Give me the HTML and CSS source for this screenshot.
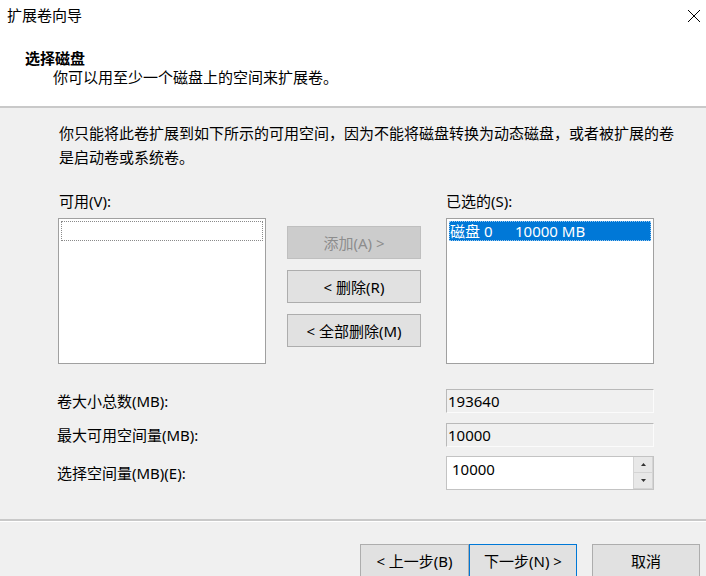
FILE: index.html
```html
<!DOCTYPE html>
<html lang="zh-CN">
<head>
<meta charset="utf-8">
<title>扩展卷向导</title>
<link rel="stylesheet" href="styles.css">
</head>
<body>
<div class="window">
  <div class="titlebar">
    <span class="title">扩展卷向导</span>
    <svg class="close" width="14" height="14" viewBox="0 0 14 14"><path d="M1 1 L13 13 M13 1 L1 13" stroke="#000" stroke-width="1" fill="none"/></svg>
  </div>
  <div class="header">
    <div class="h-title">选择磁盘</div>
    <div class="h-sub">你可以用至少一个磁盘上的空间来扩展卷。</div>
  </div>
  <div class="sep"></div>
  <div class="content">
    <p class="desc">你只能将此卷扩展到如下所示的可用空间，因为不能将磁盘转换为动态磁盘，或者被扩展的卷是启动卷或系统卷。</p>
    <div class="lists">
      <div class="col">
        <div class="lbl">可用(V):</div>
        <div class="listbox">
          <div class="focus-row"></div>
        </div>
      </div>
      <div class="btn-col">
        <div class="btn disabled">添加(A) &gt;</div>
        <div class="btn">&lt; 删除(R)</div>
        <div class="btn">&lt; 全部删除(M)</div>
      </div>
      <div class="col">
        <div class="lbl">已选的(S):</div>
        <div class="listbox">
          <div class="sel-row"><span class="disk">磁盘 0</span><span>10000 MB</span></div>
        </div>
      </div>
    </div>
    <div class="fields">
      <div class="f-row r1">
        <span class="f-lbl">卷大小总数(MB):</span>
        <div class="ro">193640</div>
      </div>
      <div class="f-row r2">
        <span class="f-lbl">最大可用空间量(MB):</span>
        <div class="ro">10000</div>
      </div>
      <div class="f-row r3">
        <span class="f-lbl">选择空间量(MB)(E):</span>
        <div class="spin">
          <div class="spin-val">10000</div>
          <div class="spin-btns">
            <div class="sb"><svg width="5" height="3" viewBox="0 0 5 3"><path d="M0 3 L2.5 0 L5 3 Z" fill="#333"/></svg></div>
            <div class="sb"><svg width="5" height="3" viewBox="0 0 5 3"><path d="M0 0 L5 0 L2.5 3 Z" fill="#333"/></svg></div>
          </div>
        </div>
      </div>
    </div>
  </div>
  <div class="sep bottom"></div>
  <div class="footer">
    <div class="fbtn back">&lt; 上一步(B)</div>
    <div class="fbtn next">下一步(N) &gt;</div>
    <div class="fbtn cancel">取消</div>
  </div>
</div>
</body>
</html>
```
FILE: styles.css
```css
* { box-sizing: border-box; }
html, body { margin: 0; padding: 0; }
body {
  width: 706px;
  height: 576px;
  overflow: hidden;
  background: #f0f0f0;
  font-family: "Noto Sans", "Noto Sans CJK SC", sans-serif;
  font-size: 15px;
  color: #000;
}
.window { width: 706px; height: 576px; }
.titlebar {
  height: 30px;
  background: #fff;
  display: flex;
  align-items: center;
  justify-content: space-between;
  padding: 0 5px 0 7px;
  line-height: 20px;
}
.close { margin-top: 1px; }
.header {
  height: 76px;
  background: #fff;
  padding: 18px 0 0 25px;
  line-height: 20px;
}
.h-title { font-weight: bold; }
.h-sub { padding-left: 28px; margin-top: -1px; }
.sep {
  height: 2px;
  background: #c9c9c9;
}
.content {
  height: 411px;
  padding: 13px 0 0 57px;
}
.desc {
  margin: 0;
  width: 620px;
  line-height: 24px;
  padding-left: 2px;
}
.lists {
  display: flex;
  margin-top: 22px;
}
.col { width: 209px; display: flex; flex-direction: column; }
.col:last-child { width: 208px; }
.lbl { line-height: 20px; height: 20px; padding-left: 2px; margin-bottom: 7px; }
.col:last-child .lbl { padding-left: 0; }
.listbox {
  width: 208px;
  height: 146px;
  background: #fff;
  border: 1px solid #a0a0a0;
  padding: 2px;
}
.col:first-child .listbox { margin-left: 1px; }
.focus-row {
  height: 20px;
  border: 1px dotted #8a8a8a;
}
.sel-row {
  height: 20px;
  background: #0078d7;
  color: #fff;
  line-height: 19px;
  display: flex;
  border: 1px dotted #9ec9ee;
}
.disk { width: 65px; }
.btn-col {
  width: 134px;
  margin: 35px 25px 0 21px;
  display: flex;
  flex-direction: column;
  gap: 11px;
}
.btn {
  height: 33px;
  background: #e1e1e1;
  border: 1px solid #adadad;
  display: flex;
  align-items: center;
  justify-content: center;
  line-height: 20px;
}
.btn.disabled {
  background: #cccccc;
  border-color: #bfbfbf;
  color: #8d8d8d;
}
.fields {
  margin-top: 25px;
  display: flex;
  flex-direction: column;
}
.f-row {
  display: flex;
  align-items: center;
  justify-content: space-between;
  width: 597px;
}
.r2 { margin-top: 10px; }
.r3 { margin-top: 9px; }
.f-lbl { line-height: 20px; }
.ro {
  width: 208px;
  height: 24px;
  border-top: 1px solid #b9b9b9;
  border-left: 1px solid #b9b9b9;
  border-right: 1px solid #fbfbfb;
  border-bottom: 1px solid #fbfbfb;
  background: #f0f0f0;
  line-height: 22px;
  padding-left: 1px;
}
.spin {
  width: 208px;
  height: 34px;
  border: 1px solid #c3c3c3;
  background: #fff;
  display: flex;
}
.spin-val {
  flex: 1;
  line-height: 24px;
  padding: 0 0 0 5px;
}
.spin-btns {
  width: 20px;
  display: flex;
  flex-direction: column;
  gap: 1px;
  background: #d4d4d4;
  padding: 0 1px 1px 1px;
}
.sb {
  flex: 1;
  background: #e8e8e8;
  display: flex;
  align-items: center;
  justify-content: center;
}
.sep.bottom {
  height: 3px;
  background: #c9c9c9;
  border-bottom: 1px solid #fff;
}
.footer {
  display: flex;
  padding: 22px 0 0 360px;
}
.fbtn {
  height: 34px;
  background: #e1e1e1;
  border: 1px solid #adadad;
  display: flex;
  align-items: center;
  justify-content: center;
  line-height: 20px;
}
.back { width: 109px; }
.next { width: 108px; border: 1px solid #0078d7; }
.cancel { width: 108px; margin-left: 15px; }
```
